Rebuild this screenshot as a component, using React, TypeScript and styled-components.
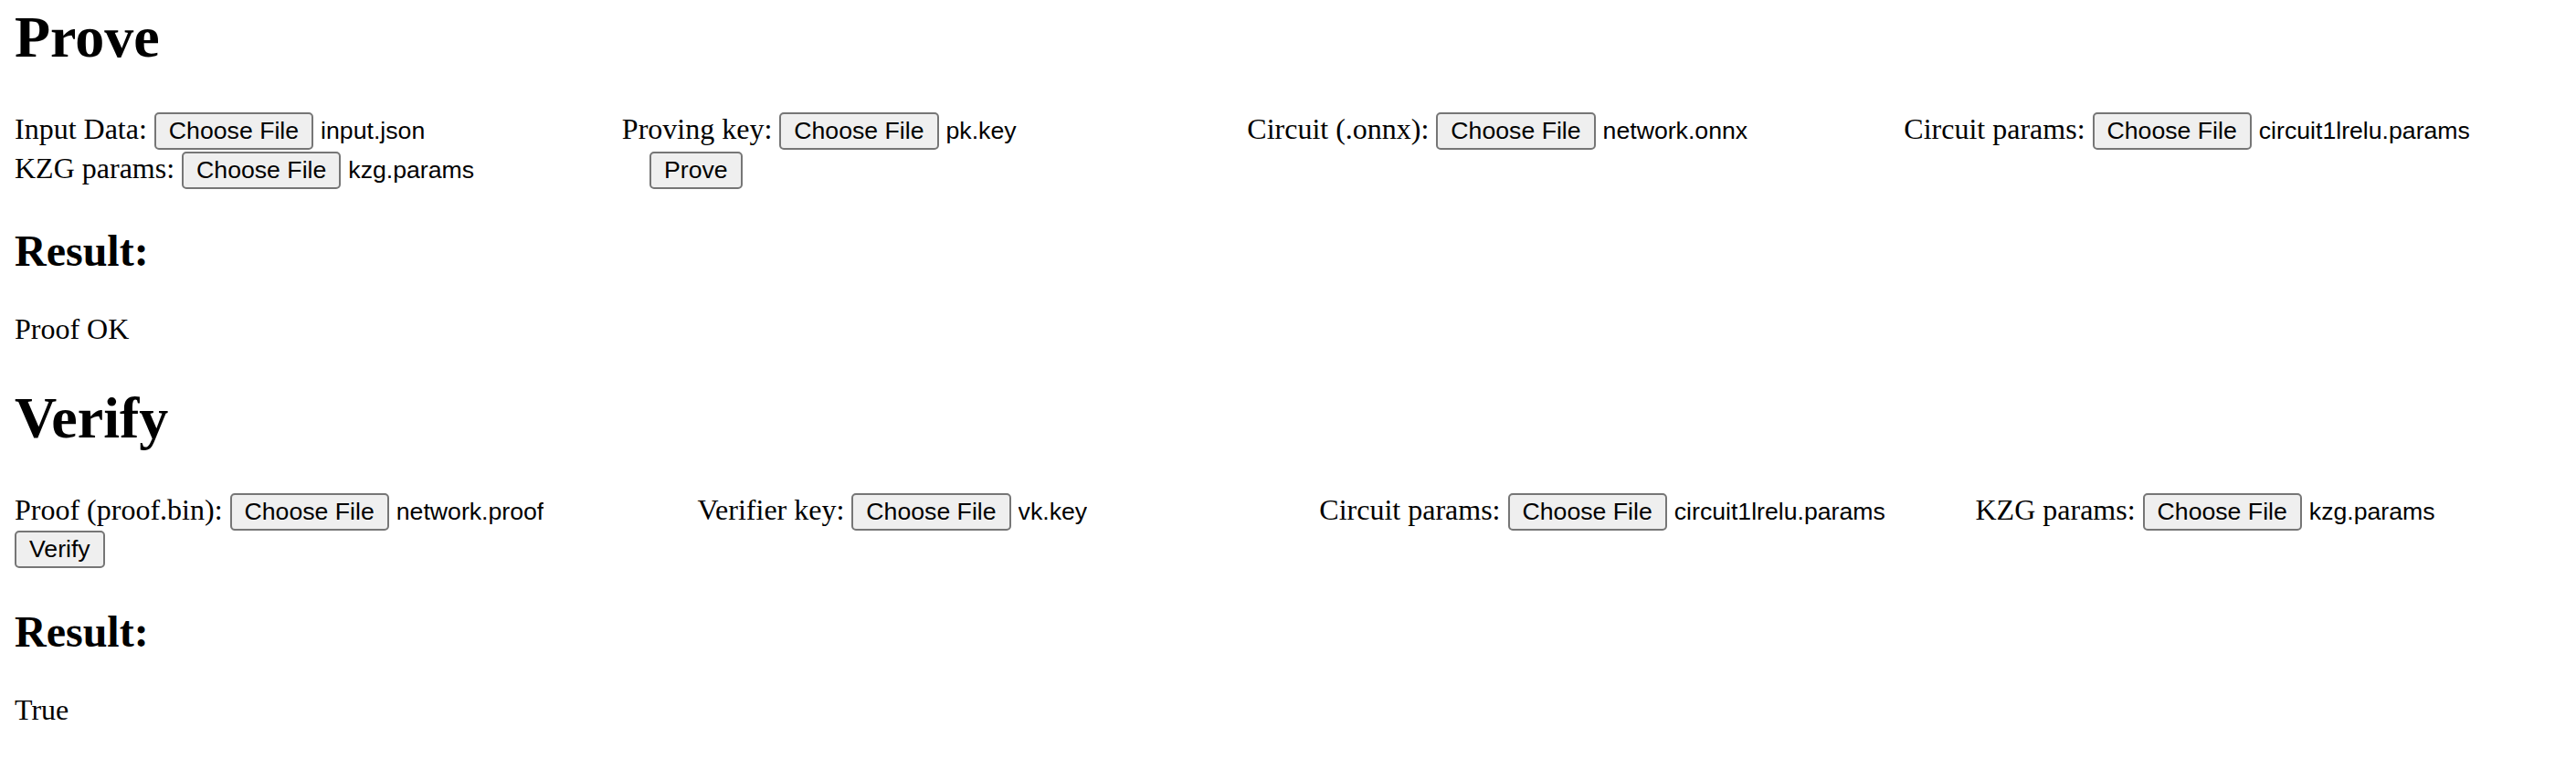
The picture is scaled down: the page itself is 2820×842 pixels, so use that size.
import React from "react";
import styled, { createGlobalStyle } from "styled-components";

const GlobalStyle = createGlobalStyle`
  html, body {
    margin: 0;
    padding: 0;
    background: #ffffff;
    overflow: hidden;
  }
  body {
    font-family: "Liberation Serif", "Times New Roman", Times, serif;
    color: #000000;
  }
`;

const Page = styled.main`
  display: flow-root;
  padding: 0 16px;
`;

const Section = styled.section``;

const Title = styled.h1`
  font-size: 64px;
  font-weight: 700;
  line-height: 74px;
  margin: 42.5px 0;
  ${Section}:first-child > &:first-child {
    margin-top: 4.4px;
  }
`;

const ResultTitle = styled.h2`
  font-size: 48px;
  font-weight: 700;
  line-height: 55px;
  margin: 40px 0;
`;

const ResultText = styled.p`
  font-size: 32px;
  line-height: 37px;
  margin: 32px 0;
`;

const Row = styled.div`
  display: flex;
  flex-wrap: nowrap;
  align-items: baseline;
  gap: 8px;
  height: 43px;
  white-space: nowrap;
`;

const Field = styled.label`
  display: inline-flex;
  flex-shrink: 0;
  align-items: baseline;
  gap: 8px;
`;

const LabelText = styled.span`
  font-size: 32px;
  line-height: 41px;
`;

const FileInput = styled.span`
  display: inline-flex;
  flex-shrink: 0;
  align-items: baseline;
  gap: 8px;
  width: 504px;
  overflow: hidden;
`;

const Button = styled.button`
  display: inline-flex;
  flex-shrink: 0;
  align-items: center;
  box-sizing: border-box;
  height: 41px;
  margin: 0;
  padding: 0 14px;
  border: 2px solid #767676;
  border-radius: 5px;
  background: #efefef;
  color: #000000;
  font-family: "Liberation Sans", Arial, Helvetica, sans-serif;
  font-size: 26.67px;
  cursor: default;
`;

const FileName = styled.span`
  font-family: "Liberation Sans", Arial, Helvetica, sans-serif;
  font-size: 26.67px;
  overflow: hidden;
  text-overflow: ellipsis;
`;

type FieldProps = { label: string; file: string };

const FileField: React.FC<FieldProps> = ({ label, file }) => (
  <Field>
    <LabelText>{label}</LabelText>
    <FileInput>
      <Button type="button">Choose File</Button>
      <FileName>{file}</FileName>
    </FileInput>
  </Field>
);

const proveRow1: FieldProps[] = [
  { label: "Input Data:", file: "input.json" },
  { label: "Proving key:", file: "pk.key" },
  { label: "Circuit (.onnx):", file: "network.onnx" },
  { label: "Circuit params:", file: "circuit1lrelu.params" },
];

const verifyRow1: FieldProps[] = [
  { label: "Proof (proof.bin):", file: "network.proof" },
  { label: "Verifier key:", file: "vk.key" },
  { label: "Circuit params:", file: "circuit1lrelu.params" },
  { label: "KZG params:", file: "kzg.params" },
];

export default function App() {
  return (
    <>
      <GlobalStyle />
      <Page>
        <Section>
          <Title>Prove</Title>
          <Row>
            {proveRow1.map((f) => (
              <FileField key={f.label} {...f} />
            ))}
          </Row>
          <Row>
            <FileField label="KZG params:" file="kzg.params" />
            <Button type="button">Prove</Button>
          </Row>
          <ResultTitle>Result:</ResultTitle>
          <ResultText>Proof OK</ResultText>
        </Section>
        <Section>
          <Title>Verify</Title>
          <Row>
            {verifyRow1.map((f) => (
              <FileField key={f.label} {...f} />
            ))}
          </Row>
          <Row>
            <Button type="button">Verify</Button>
          </Row>
          <ResultTitle>Result:</ResultTitle>
          <ResultText>True</ResultText>
        </Section>
      </Page>
    </>
  );
}
